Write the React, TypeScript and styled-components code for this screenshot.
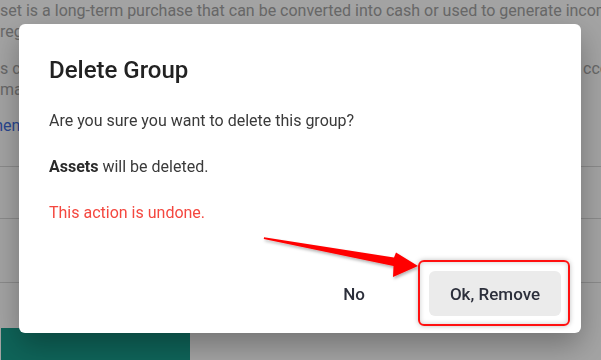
import React from 'react';
import styled, { createGlobalStyle } from 'styled-components';

const GlobalStyle = createGlobalStyle`
    html, body {
        margin: 0;
        padding: 0;
        width: 601px;
        height: 360px;
        overflow: hidden;
        background: #fff;
        font-family: Roboto, "Liberation Sans", sans-serif;
    }
`;

const Page = styled.div`
    width: 601px;
    height: 360px;
    overflow: hidden;
    display: flex;
    flex-direction: column;
    color: #a3a3a3;
    font-size: 16px;
`;

const Line = styled.div`
    white-space: nowrap;
    line-height: 21px;
    display: grid;
    grid-template-columns: 583px auto;
`;

const Para = styled.div`
    margin-bottom: 16px;
`;

const Link = styled.div`
    color: #3f6ee0;
    line-height: 21px;
    margin-left: -20px;
    margin-top: -1px;
`;

const Rows = styled.div`
    margin-top: 30px;
    display: flex;
    flex-direction: column;
`;

const Row = styled.div<{ $h: number }>`
    height: ${p => p.$h}px;
    border-top: 1px solid #d8d8d8;
`;

const TealButton = styled.div`
    margin-top: auto;
    margin-left: 1px;
    width: 189px;
    height: 32px;
    background: #179c8b;
`;

const Overlay = styled.div`
    position: fixed;
    inset: 0;
    background: rgba(0, 0, 0, 0.36);
`;

const Dialog = styled.div`
    position: fixed;
    left: 19px;
    top: 24px;
    width: 562px;
    height: 309px;
    box-sizing: border-box;
    background: #fff;
    border-radius: 6px;
    box-shadow: 0 12px 30px rgba(0, 0, 0, 0.3);
    padding: 30px 20px 17px 30px;
    display: flex;
    flex-direction: column;
`;

const Title = styled.h2`
    margin: 0 0 23px;
    font-size: 24px;
    line-height: 32px;
    font-weight: 500;
    color: #222;
`;

const Text = styled.p<{ $danger?: boolean }>`
    margin: 0 0 22px;
    font-size: 16px;
    line-height: 24px;
    color: ${p => (p.$danger ? '#f4473f' : '#3a3a3a')};

    b {
        font-weight: 700;
        color: #2a2a2a;
    }
`;

const Footer = styled.div`
    margin-top: auto;
    display: flex;
    justify-content: flex-end;
    align-items: center;
    gap: 44px;
`;

const Button = styled.button<{ $filled?: boolean }>`
    height: 45px;
    padding: 0 ${p => (p.$filled ? 0 : 20)}px;
    width: ${p => (p.$filled ? '132px' : 'auto')};
    border: none;
    border-radius: 6px;
    background: ${p => (p.$filled ? '#ebebeb' : 'transparent')};
    color: #2c2f3b;
    font-family: Roboto, "Liberation Sans", sans-serif;
    font-size: 17px;
    font-weight: 500;
`;

const Highlight = styled.div`
    position: fixed;
    left: 418px;
    top: 260px;
    width: 152px;
    height: 66px;
    box-sizing: border-box;
    border: 2px solid #ff1010;
    border-radius: 6px;
    box-shadow: 0 0 5px rgba(0, 0, 0, 0.25), inset 0 0 5px rgba(0, 0, 0, 0.2);
`;

const ArrowLayer = styled.svg`
    position: fixed;
    left: 0;
    top: 0;
    pointer-events: none;
`;

const App: React.FC = () => {
    return (
        <>
            <GlobalStyle />
            <Page>
                <Para>
                    <Line>set is a long-term purchase that can be converted into cash or used to generate income</Line>
                    <Line>regularly over time.</Line>
                </Para>
                <Para>
                    <Line>
                        <span>s can be tracked here with their value and linked</span>
                        <span>ccounts</span>
                    </Line>
                    <Line>manage them easily.</Line>
                </Para>
                <Link>When to use it</Link>
                <Rows>
                    <Row $h={51} />
                    <Row $h={63} />
                    <Row $h={10} />
                </Rows>
                <TealButton />
            </Page>
            <Overlay />
            <Dialog>
                <Title>Delete Group</Title>
                <Text>Are you sure you want to delete this group?</Text>
                <Text><b>Assets</b> will be deleted.</Text>
                <Text $danger>This action is undone.</Text>
                <Footer>
                    <Button>No</Button>
                    <Button $filled>Ok, Remove</Button>
                </Footer>
            </Dialog>
            <Highlight />
            <ArrowLayer width="601" height="360" viewBox="0 0 601 360">
                <defs>
                    <filter id="arrowShadow" x="-10%" y="-30%" width="120%" height="160%">
                        <feDropShadow dx="1" dy="2" stdDeviation="1.5" floodColor="#000" floodOpacity="0.3" />
                    </filter>
                </defs>
                <polygon
                    points="264,237.3 394,257.5 396,252.5 418,266 393,277 393.5,266 263.8,239"
                    fill="#ff0000"
                    filter="url(#arrowShadow)"
                />
            </ArrowLayer>
        </>
    );
};

export default App;
